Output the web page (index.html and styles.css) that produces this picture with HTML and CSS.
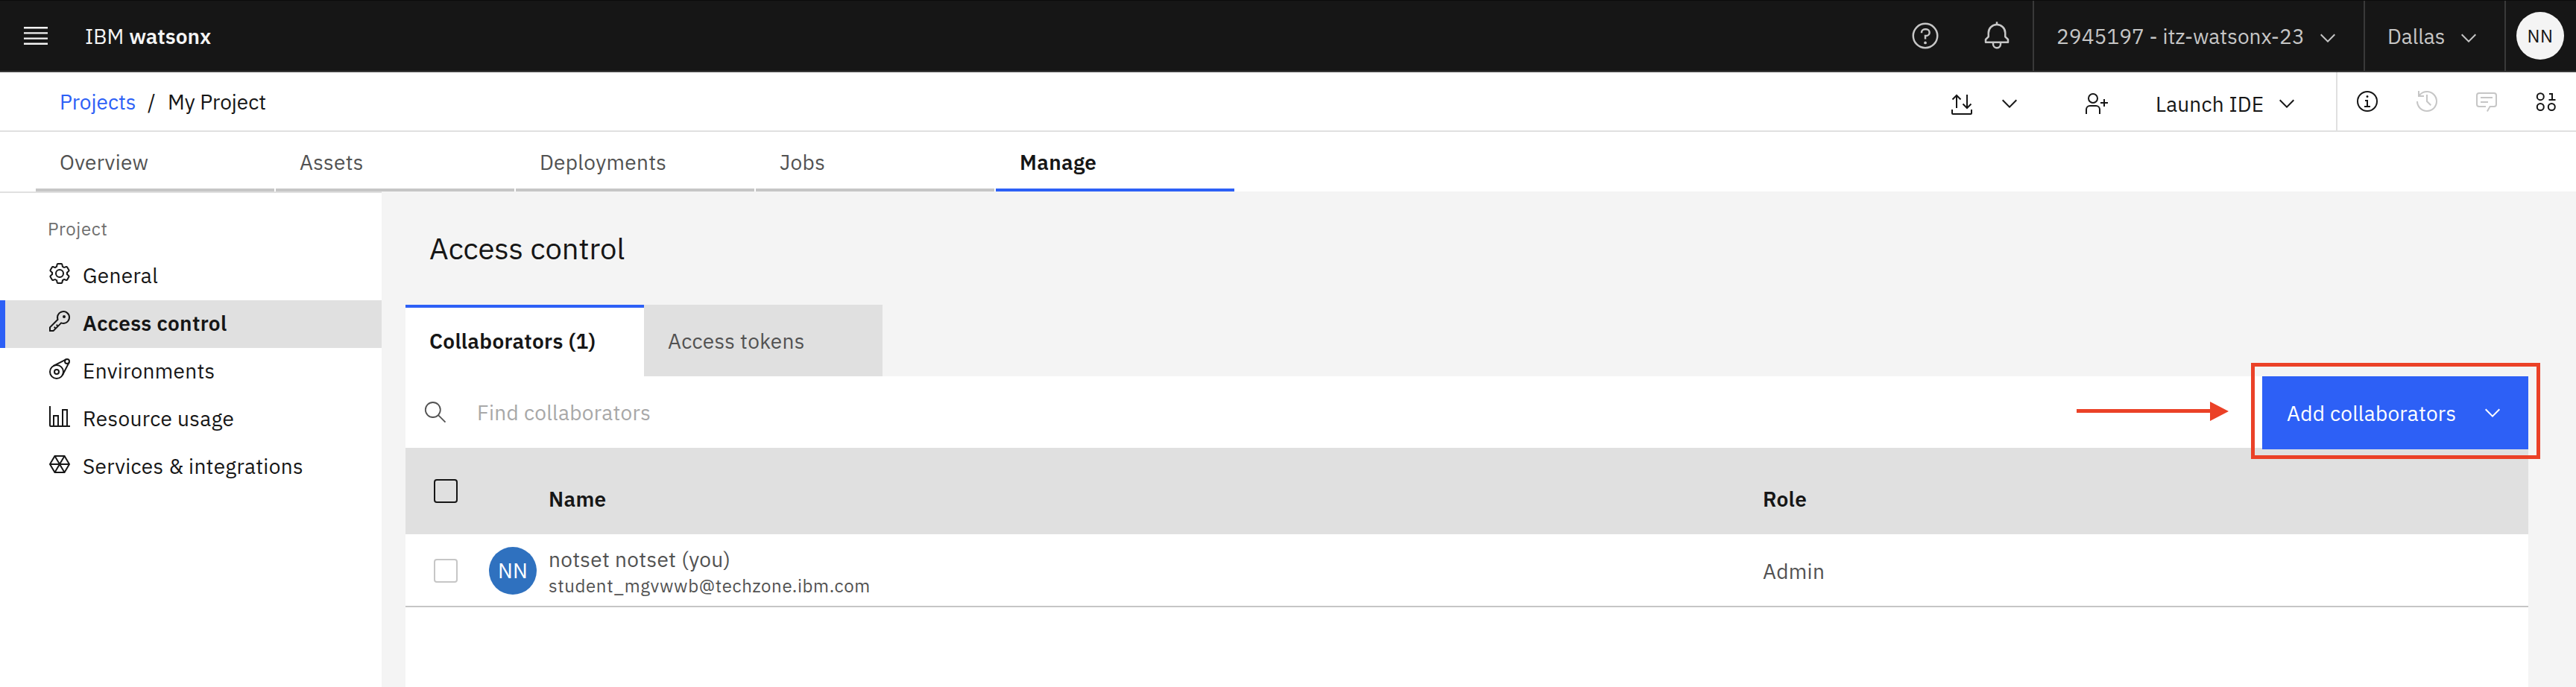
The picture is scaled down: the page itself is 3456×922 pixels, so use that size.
FILE: index.html
```html
<!DOCTYPE html>
<html lang="en">
<head>
<meta charset="utf-8">
<title>IBM watsonx - Access control</title>
<link rel="stylesheet" href="styles.css">
</head>
<body>
<svg class="defs" aria-hidden="true">
  <symbol id="chevron" viewBox="0 0 16 16"><path d="M8 11 3 6l.7-.7L8 9.6l4.3-4.3.7.7z"/></symbol>
</svg>

<header class="header">
  <button class="menu-btn" aria-label="Menu"><svg class="icon-40" viewBox="0 0 20 20"><path d="M2 14.8h16V16H2zM2 11.2h16v1.2H2zM2 7.6h16v1.2H2zM2 4h16v1.2H2z"/></svg></button>
  <a class="brand"><span>IBM</span><span class="brand-product">watsonx</span></a>
  <div class="header-tools">
    <button class="header-icon" aria-label="Help"><svg class="icon-40" viewBox="0 0 32 32"><path d="M16 2a14 14 0 1 0 14 14A14 14 0 0 0 16 2Zm0 26a12 12 0 1 1 12-12 12 12 0 0 1-12 12Z"/><circle cx="16" cy="23.5" r="1.5"/><path d="M17 8h-1.500A4.490 4.490 0 0 0 11 12.500V13h2v-.500A2.500 2.500 0 0 1 15.500 10H17a2.500 2.500 0 0 1 0 5h-2v4.500h2V17a4.500 4.500 0 0 0 0-9z"/></svg></button>
    <button class="header-icon" aria-label="Notifications"><svg class="icon-40" viewBox="0 0 32 32"><path d="M28.707 19.293 26 16.586V13a10.014 10.014 0 0 0-9-9.950V1h-2v2.050A10.014 10.014 0 0 0 6 13v3.586l-2.707 2.707A1 1 0 0 0 3 20v3a1 1 0 0 0 1 1h7v.777a5.152 5.152 0 0 0 4.500 5.199A5.006 5.006 0 0 0 21 25v-1h7a1 1 0 0 0 1-1v-3a1 1 0 0 0-.293-.707ZM19 25a3 3 0 0 1-6 0v-1h6Zm8-3H5v-1.586l2.707-2.707A1 1 0 0 0 8 17v-4a8 8 0 0 1 16 0v4a1 1 0 0 0 .293.707L27 20.414Z"/></svg></button>
    <button class="header-select account"><span>2945197 - itz-watsonx-23</span><svg class="icon-32"><use href="#chevron"/></svg></button>
    <button class="header-select region"><span>Dallas</span><svg class="icon-32"><use href="#chevron"/></svg></button>
    <div class="user-cell"><span class="user-avatar">NN</span></div>
  </div>
</header>

<div class="toolbar">
  <nav class="breadcrumb"><a class="crumb-link">Projects</a><span class="crumb-sep">/</span><span>My Project</span></nav>
  <div class="toolbar-actions">
    <svg class="icon-32 line" viewBox="0 0 32 32"><path d="M3 24v5q0 1 1 1h24q1 0 1-1v-5M9 22V5.500M3.500 10.500 9 5l5.500 5.500M23 4v17.500M17.500 16.500 23 22l5.500-5.500"/></svg>
    <svg class="icon-32 transfer-chevron"><use href="#chevron"/></svg>
    <svg class="icon-32 line add-person" viewBox="0 0 32 32"><circle cx="12" cy="9" r="6"/><path d="M3 30v-6a5 5 0 0 1 5-5h8a5 5 0 0 1 5 5v6M27 10v10M22 15h10"/></svg>
    <span class="launch">Launch IDE</span>
    <svg class="icon-32"><use href="#chevron"/></svg>
  </div>
  <div class="toolbar-panels">
    <svg class="icon-32" viewBox="0 0 32 32"><path d="M17 22v-8h-4v2h2v6h-3v2h8v-2zM16 8a1.500 1.500 0 1 0 1.500 1.500A1.500 1.500 0 0 0 16 8Z"/><path d="M16 30a14 14 0 1 1 14-14 14 14 0 0 1-14 14Zm0-26a12 12 0 1 0 12 12A12 12 0 0 0 16 4Z"/></svg>
    <svg class="icon-32 disabled" viewBox="0 0 32 32"><path d="M20.590 22 15 16.410V7h2v8.580l5 5.010L20.590 22z"/><path d="M16 2A13.940 13.940 0 0 0 6 6.230V2H4v8h8V8H7.080A12 12 0 1 1 4 16H2A14 14 0 1 0 16 2Z"/></svg>
    <svg class="icon-32 disabled" viewBox="0 0 32 32"><path d="M17.740 30 16 29l4-7h6a2 2 0 0 0 2-2V8a2 2 0 0 0-2-2H6a2 2 0 0 0-2 2v12a2 2 0 0 0 2 2h9v2H6a4 4 0 0 1-4-4V8a4 4 0 0 1 4-4h20a4 4 0 0 1 4 4v12a4 4 0 0 1-4 4h-4.840Z"/><path d="M8 10h16v2H8zM8 16h10v2H8z"/></svg>
    <svg class="icon-32 line" viewBox="0 0 32 32"><circle cx="8.300" cy="9.700" r="4.500"/><circle cx="8.300" cy="23.500" r="4.500"/><circle cx="23.300" cy="23.500" r="4.500"/><path d="M20 6h4v8M19.500 14h9"/></svg>
  </div>
</div>

<nav class="project-tabs">
  <a class="project-tab">Overview</a>
  <a class="project-tab">Assets</a>
  <a class="project-tab">Deployments</a>
  <a class="project-tab">Jobs</a>
  <a class="project-tab selected">Manage</a>
</nav>

<div class="layout">
  <aside class="sidebar">
    <div class="sidebar-label">Project</div>
    <a class="side-item"><svg class="icon-32" viewBox="0 0 32 32" fill-rule="evenodd"><path d="M27 16.760V15.230l1.920-1.680A2 2 0 0 0 29.300 11L26.940 7a2 2 0 0 0-1.730-1 2 2 0 0 0-.640.100l-2.430.820a11.350 11.350 0 0 0-1.310-.750l-.510-2.520a2 2 0 0 0-2-1.610h-4.680a2 2 0 0 0-2 1.610l-.510 2.520a11.480 11.480 0 0 0-1.320.750L7.430 6.060A2 2 0 0 0 6.790 6 2 2 0 0 0 5.060 7L2.700 11a2 2 0 0 0 .410 2.510L5 15.240v1.530l-1.890 1.680A2 2 0 0 0 2.700 21l2.360 4a2 2 0 0 0 1.730 1 2 2 0 0 0 .640-.100l2.430-.820a11.350 11.350 0 0 0 1.310.750l.510 2.520a2 2 0 0 0 2 1.610h4.720a2 2 0 0 0 2-1.610l.510-2.520a11.480 11.480 0 0 0 1.320-.750l2.420.820a2 2 0 0 0 .640.100 2 2 0 0 0 1.730-1l2.280-4a2 2 0 0 0-.410-2.510ZM25.210 24l-3.430-1.160a8.860 8.860 0 0 1-2.710 1.570L18.360 28h-4.720l-.710-3.550a9.360 9.360 0 0 1-2.700-1.570L6.790 24 4.430 20l2.720-2.400a8.900 8.900 0 0 1 0-3.130L4.430 12l2.360-4 3.430 1.160a8.860 8.860 0 0 1 2.710-1.570L13.640 4h4.720l.710 3.550a9.360 9.360 0 0 1 2.700 1.570L25.210 8l2.360 4-2.720 2.400a8.900 8.900 0 0 1 0 3.130L27.570 20Z"/><path d="M16 22a6 6 0 1 1 6-6 5.940 5.940 0 0 1-6 6Zm0-10a4 4 0 1 0 4 4 4 4 0 0 0-4-4Z"/></svg><span>General</span></a>
    <a class="side-item current"><svg class="icon-32" viewBox="0 0 32 32"><path d="M21 2a9 9 0 0 0-9 9 8.870 8.870 0 0 0 .390 2.610L2 24v6h6l10.390-10.390A9 9 0 1 0 21 2Zm0 16a7 7 0 0 1-2-.300l-1.150-.350-.870.870-3.180 3.180L12.410 20 11 21.410l1.380 1.380-1.590 1.590L9.410 23 8 24.410l1.380 1.380L7.170 28H4v-3.170l9.780-9.810.870-.870L14.300 13A7 7 0 1 1 21 18Z"/><circle cx="22" cy="10" r="2"/></svg><span>Access control</span></a>
    <a class="side-item"><svg class="icon-32 line" viewBox="0 0 32 32"><circle cx="12" cy="20" r="9"/><circle cx="12" cy="20" r="3"/><circle cx="26" cy="6" r="3"/><path d="M7.500 12.200 24.600 3.300M19.800 24.500 28.700 7.400"/></svg><span>Environments</span></a>
    <a class="side-item"><svg class="icon-32 line" viewBox="0 0 32 32"><path d="M3 2v26q0 1 1 1h26M8 28V15h6v13M20 28V7h6v21"/></svg><span>Resource usage</span></a>
    <a class="side-item"><svg class="icon-32 line" viewBox="0 0 32 32"><path d="M9.500 5h13L29 16l-6.500 11h-13L3 16ZM9.500 5l13 22M22.500 5l-13 22M3 16h26"/></svg><span>Services &amp; integrations</span></a>
  </aside>

  <main class="main">
    <h1 class="page-title">Access control</h1>
    <div class="content-tabs">
      <a class="content-tab active">Collaborators (1)</a>
      <a class="content-tab">Access tokens</a>
    </div>
    <section class="panel">
      <div class="search-row">
        <svg class="icon-32 line search-icon" viewBox="0 0 32 32"><circle cx="12.800" cy="13" r="10"/><path d="M20 20.200 29.500 29.700"/></svg>
        <span class="search-hint">Find collaborators</span>
        <button class="add-btn"><span>Add collaborators</span><svg class="icon-32"><use href="#chevron"/></svg></button>
      </div>
      <div class="table-row table-head">
        <span class="checkbox"></span>
        <span class="col-name">Name</span>
        <span class="col-role">Role</span>
      </div>
      <div class="table-row table-body">
        <span class="checkbox"></span>
        <span class="avatar">NN</span>
        <div class="person"><span>notset notset (you)</span><span class="person-mail">student_mgvwwb@techzone.ibm.com</span></div>
        <span class="col-role">Admin</span>
      </div>
    </section>
  </main>
</div>

<svg class="pointer-arrow" viewBox="0 0 204 26"><path d="M0 10h179V0l25 13-25 13V15H0z"/></svg>
<div class="highlight"></div>
</body>
</html>
```
FILE: styles.css
```css
* { box-sizing: border-box; }

body {
  margin: 0;
  width: 3456px;
  height: 922px;
  overflow: hidden;
  background: #fff;
  color: #161616;
  font-family: "IBM Plex Sans", "Noto Sans", sans-serif;
  font-size: 28px;
  line-height: 37px;
  letter-spacing: 0.32px;
  white-space: nowrap;
  display: flex;
  flex-direction: column;
}

button {
  border: 0;
  padding: 0;
  background: none;
  color: inherit;
  font: inherit;
  letter-spacing: inherit;
}

svg { display: block; fill: currentColor; flex: none; }
.defs { position: absolute; width: 0; height: 0; }
.icon-40 { width: 40px; height: 40px; }
.icon-32 { width: 32px; height: 32px; }
.line { fill: none; stroke: currentColor; stroke-width: 2; }
.disabled { color: #c6c6c6; }

/* Header */
.header {
  height: 97px;
  flex: none;
  display: flex;
  background: #161616;
  border-top: 1px solid #0b0b0b;
  border-bottom: 2px solid #393939;
  color: #c6c6c6;
  letter-spacing: 0;
}
.menu-btn { width: 96px; display: flex; align-items: center; justify-content: center; color: #f4f4f4; }
.brand { display: flex; align-items: center; gap: 7px; padding: 1px 0 0 18px; color: #f4f4f4; }
.brand-product { font-weight: 600; }
.header-tools { margin-left: auto; display: flex; }
.header-icon { width: 96px; display: flex; align-items: center; justify-content: center; }
.header-select {
  display: flex;
  align-items: center;
  justify-content: space-between;
  border-left: 2px solid #393939;
  padding: 1px 32px 0 30px;
}
.header-select svg { margin-top: 5px; }
.account { width: 444px; letter-spacing: 0.05px; }
.region { width: 189px; }
.user-cell { width: 96px; border-left: 2px solid #393939; display: flex; align-items: center; padding-left: 14px; }
.user-avatar {
  width: 64px;
  height: 64px;
  border-radius: 50%;
  background: #f4f4f4;
  color: #161616;
  font-size: 24px;
  line-height: 64px;
  letter-spacing: 0.64px;
  text-align: center;
}

/* Breadcrumb and toolbar */
.toolbar { height: 80px; flex: none; display: flex; border-bottom: 2px solid #e0e0e0; letter-spacing: 0; }
.breadcrumb { display: flex; align-items: center; padding: 1px 0 0 80px; }
.crumb-link { color: #2d60f6; width: 118px; }
.crumb-sep { width: 27px; }
.toolbar-actions { margin-left: auto; padding: 6px 50px 0 0; display: flex; align-items: center; }
.transfer-chevron { margin-left: 32px; }
.add-person { margin-left: 84px; }
.launch { width: 160px; margin: 1px 0 0 64px; letter-spacing: 0.16px; }
.toolbar-panels {
  display: flex;
  align-items: center;
  gap: 48px;
  border-left: 2px solid #e0e0e0;
  padding: 0 24px;
}

/* Project tabs */
.project-tabs { height: 80px; flex: none; display: flex; gap: 2px; padding-left: 48px; }
.project-tab {
  width: 320px;
  padding: 22px 0 0 32px;
  border-bottom: 4px solid #c6c6c6;
  color: #525252;
}
.project-tab.selected { border-color: #2d60f6; color: #161616; font-weight: 600; }

/* Sidebar */
.layout { flex: 1; display: flex; min-height: 0; }
.sidebar { width: 512px; border-top: 2px solid #e0e0e0; }
.sidebar-label {
  height: 80px;
  padding: 32px 0 0 64px;
  color: #6f6f6f;
  font-size: 24px;
  line-height: 32px;
  letter-spacing: 0.64px;
}
.side-item { height: 64px; display: flex; gap: 15px; padding: 12px 0 0 64px; }
.side-item.current { background: #e0e0e0; border-left: 7px solid #2d60f6; padding-left: 57px; font-weight: 600; }

/* Main */
.main { flex: 1; background: #f4f4f4; padding: 0 64px 0 32px; display: flex; flex-direction: column; }
.page-title {
  margin: 0;
  height: 152px;
  padding: 50px 0 0 32px;
  font-size: 40px;
  font-weight: 400;
  line-height: 52px;
  letter-spacing: 0;
}
.content-tabs { display: flex; height: 96px; flex: none; }
.content-tab {
  width: 320px;
  background: #e0e0e0;
  color: #525252;
  padding: 30px 0 0 32px;
}
.content-tab.active {
  background: #fff;
  color: #161616;
  border-top: 4px solid #2d60f6;
  padding-top: 26px;
  font-weight: 600;
}
.panel { flex: 1; background: #fff; }
.search-row { height: 96px; display: flex; align-items: center; padding-left: 24px; }
.search-icon { color: #525252; stroke-width: 1.8; }
.search-hint { margin-left: 40px; padding-top: 1px; color: #a8a8a8; }
.add-btn {
  position: relative;
  width: 357px;
  height: 98px;
  margin: 0 0 -2px auto;
  padding: 0 32px 0 33px;
  display: flex;
  align-items: center;
  justify-content: space-between;
  background: #2d60f6;
  color: #fff;
  letter-spacing: 0.25px;
}
.add-btn span { padding-top: 1px; }
.table-row { display: grid; align-items: start; }
.table-head {
  height: 116px;
  padding-left: 38px;
  grid-template-columns: 154px 1629px 1fr;
  background: #e0e0e0;
  font-weight: 600;
}
.table-head .checkbox { margin-top: 42px; }
.col-name, .table-head .col-role { margin-top: 50px; }
.checkbox { width: 32px; height: 32px; border: 2px solid #161616; border-radius: 4px; }
.table-body {
  height: 98px;
  padding-left: 38px;
  grid-template-columns: 74px 80px 1629px 1fr;
  border-bottom: 2px solid #c6c6c6;
  color: #525252;
}
.table-body .checkbox { border-color: #c6c6c6; margin-top: 33px; }
.avatar {
  width: 64px;
  height: 64px;
  margin-top: 17px;
  border-radius: 50%;
  background: #2f71bf;
  color: #fff;
  line-height: 64px;
  text-align: center;
}
.person { display: flex; flex-direction: column; padding-top: 15px; }
.person-mail { margin-top: 1px; font-size: 24px; line-height: 32px; letter-spacing: 0.64px; }
.table-body .col-role { margin-top: 31px; }

/* Annotation */
.pointer-arrow { position: absolute; left: 2786px; top: 539px; width: 204px; height: 26px; fill: #eb4127; }
.highlight { position: absolute; left: 3020px; top: 487px; width: 388px; height: 129px; border: 5px solid #eb4127; }
```
